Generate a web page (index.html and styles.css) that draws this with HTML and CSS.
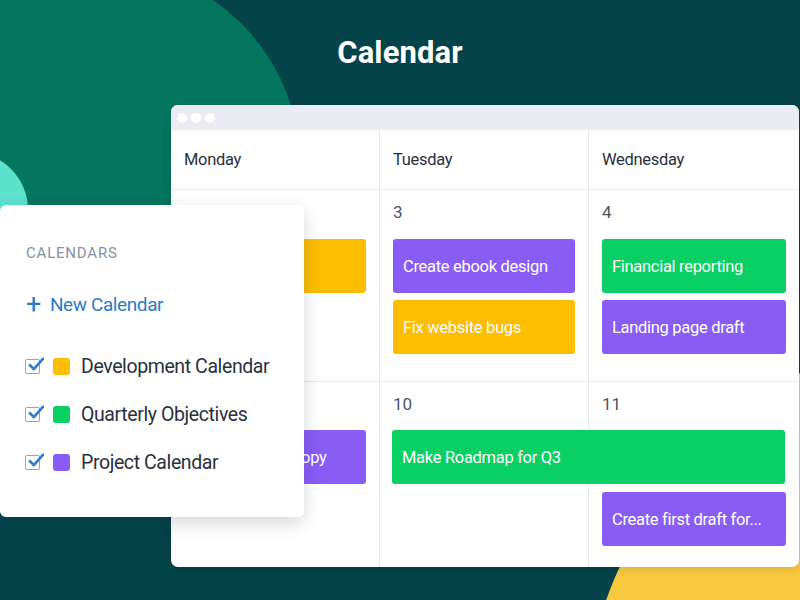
FILE: index.html
```html
<!DOCTYPE html>
<html lang="en">
<head>
<meta charset="utf-8">
<title>Calendar</title>
<link rel="stylesheet" href="styles.css">
</head>
<body>
<div class="stage">
  <div class="blob blob-green"></div>
  <div class="blob blob-mint"></div>
  <div class="blob blob-yellow"></div>

  <h1 class="title">Calendar</h1>

  <div class="window">
    <div class="titlebar">
      <span class="dot"></span><span class="dot"></span><span class="dot"></span>
    </div>
    <div class="grid">
      <div class="cell head">Monday</div>
      <div class="cell head">Tuesday</div>
      <div class="cell head last">Wednesday</div>

      <div class="cell day">
        <div class="num"></div>
        <div class="event yellow">Review tasks</div>
      </div>
      <div class="cell day">
        <div class="num">3</div>
        <div class="event purple">Create ebook design</div>
        <div class="event yellow">Fix website bugs</div>
      </div>
      <div class="cell day last">
        <div class="num">4</div>
        <div class="event green">Financial reporting</div>
        <div class="event purple">Landing page draft</div>
      </div>

      <div class="cell day bottom c1">
        <div class="num"></div>
        <div class="event purple">Write product copy</div>
      </div>
      <div class="cell day bottom c2">
        <div class="num">10</div>
      </div>
      <div class="cell day bottom last c3">
        <div class="num">11</div>
        <div class="event purple pushed">Create first draft for...</div>
      </div>
      <div class="event green span">Make Roadmap for Q3</div>
    </div>
  </div>

  <aside class="panel">
    <div class="panel-label">CALENDARS</div>
    <div class="new-cal"><span class="plus">+</span>New Calendar</div>
    <ul class="cal-list">
      <li class="cal-item">
        <span class="check"><svg viewBox="0 0 16 16" width="18" height="18"><path d="M3.5 8.2 L7 11.6 L15 2.5" fill="none" stroke="#2f7fd0" stroke-width="2.4" stroke-linecap="round" stroke-linejoin="round"/></svg></span>
        <span class="swatch sw-yellow"></span>
        <span class="cal-name">Development Calendar</span>
      </li>
      <li class="cal-item">
        <span class="check"><svg viewBox="0 0 16 16" width="18" height="18"><path d="M3.5 8.2 L7 11.6 L15 2.5" fill="none" stroke="#2f7fd0" stroke-width="2.4" stroke-linecap="round" stroke-linejoin="round"/></svg></span>
        <span class="swatch sw-green"></span>
        <span class="cal-name">Quarterly Objectives</span>
      </li>
      <li class="cal-item">
        <span class="check"><svg viewBox="0 0 16 16" width="18" height="18"><path d="M3.5 8.2 L7 11.6 L15 2.5" fill="none" stroke="#2f7fd0" stroke-width="2.4" stroke-linecap="round" stroke-linejoin="round"/></svg></span>
        <span class="swatch sw-purple"></span>
        <span class="cal-name">Project Calendar</span>
      </li>
    </ul>
  </aside>
</div>
</body>
</html>
```

FILE: styles.css
```css
* { box-sizing: border-box; }

html, body {
  margin: 0;
  padding: 0;
}

body {
  width: 800px;
  height: 600px;
  overflow: hidden;
  background: #05434b;
  font-family: Roboto, "Noto Sans", sans-serif;
}

.stage {
  position: relative;
  width: 800px;
  height: 600px;
  overflow: hidden;
  display: flex;
  flex-direction: column;
}

.blob {
  position: absolute;
  border-radius: 50%;
}

.blob-green {
  left: -100px;
  top: -35px;
  width: 400px;
  height: 400px;
  background: #04765d;
}

.blob-mint {
  left: -88px;
  top: 152px;
  width: 116px;
  height: 116px;
  background: #5de2cf;
}

.blob-yellow {
  left: 582px;
  top: 322px;
  width: 836px;
  height: 836px;
  background: #f8c83f;
}

.title {
  position: relative;
  margin: 33px 0 0;
  height: 40px;
  line-height: 40px;
  text-align: center;
  color: #ffffff;
  font-size: 31px;
  font-weight: 700;
  letter-spacing: 0.1px;
}

.window {
  position: relative;
  margin: 32px 0 0 171px;
  width: 628px;
  height: 462px;
  background: #ffffff;
  border-radius: 7px;
  overflow: hidden;
  box-shadow: 0 2px 8px rgba(0, 0, 0, 0.12);
}

.titlebar {
  height: 25px;
  background: #ebebf4;
  display: flex;
  align-items: center;
  gap: 4px;
  padding-left: 6px;
}

.dot {
  width: 10px;
  height: 10px;
  border-radius: 50%;
  background: #ffffff;
}

.grid {
  display: grid;
  grid-template-columns: 209px 209px 210px;
  grid-template-rows: 60px 192px 185px;
}

.cell {
  border-right: 1px solid #e7e9ef;
  border-bottom: 1px solid #e7e9ef;
  padding: 0 13px;
}

.cell.last { border-right: none; }
.cell.bottom { border-bottom: none; grid-row: 3; }
.c1 { grid-column: 1; }
.c2 { grid-column: 2; }
.c3 { grid-column: 3; }

.head {
  display: flex;
  align-items: center;
  font-size: 16.5px;
  letter-spacing: -0.3px;
  color: #2b3040;
}

.day {
  padding-top: 12px;
}

.num {
  height: 20px;
  line-height: 20px;
  font-size: 17px;
  color: #4b5568;
  margin-bottom: 17px;
}

.bottom .num { margin-bottom: 16px; }

.event {
  height: 54px;
  border-radius: 3px;
  color: #ffffff;
  font-size: 16.5px;
  letter-spacing: -0.3px;
  display: flex;
  align-items: center;
  padding-left: 10px;
  margin-bottom: 7px;
  white-space: nowrap;
  overflow: hidden;
}

.purple { background: #895cf6; }
.yellow { background: #fdbd00; }
.green { background: #0acf64; }

.event.pushed { margin-top: 78px; }

.event.span {
  grid-column: 2 / 4;
  grid-row: 3;
  align-self: start;
  z-index: 1;
  margin: 48px 14px 0 12px;
}

.panel {
  position: absolute;
  left: 0;
  top: 205px;
  width: 304px;
  height: 312px;
  background: #ffffff;
  border-radius: 6px;
  box-shadow: 0 6px 18px rgba(20, 40, 60, 0.18);
  padding: 38px 0 0 26px;
  z-index: 2;
}

.panel-label {
  font-size: 15px;
  letter-spacing: 0.8px;
  color: #8890a3;
  line-height: 20px;
}

.new-cal {
  margin-top: 29px;
  font-size: 19px;
  letter-spacing: -0.4px;
  line-height: 26px;
  color: #2c7cc5;
  display: flex;
  align-items: center;
}

.plus {
  font-size: 27px;
  font-weight: 400;
  margin-right: 9px;
  line-height: 26px;
  margin-top: -3px;
}

.cal-list {
  list-style: none;
  margin: 35px 0 0;
  padding: 0;
  display: flex;
  flex-direction: column;
  gap: 22px;
}

.cal-item {
  display: flex;
  align-items: center;
  height: 26px;
}

.check {
  position: relative;
  width: 15px;
  height: 15px;
  border: 1.5px solid #9aa3b5;
  border-radius: 2px;
  margin-left: -1px;
}

.check svg {
  position: absolute;
  left: 0px;
  top: -4px;
}

.swatch {
  width: 17px;
  height: 17px;
  border-radius: 3px;
  margin-left: 13px;
}

.sw-yellow { background: #fdbd00; }
.sw-green { background: #0acf64; }
.sw-purple { background: #895cf6; }

.cal-name {
  margin-left: 11px;
  font-size: 19.5px;
  letter-spacing: -0.4px;
  color: #2b3040;
}
```
